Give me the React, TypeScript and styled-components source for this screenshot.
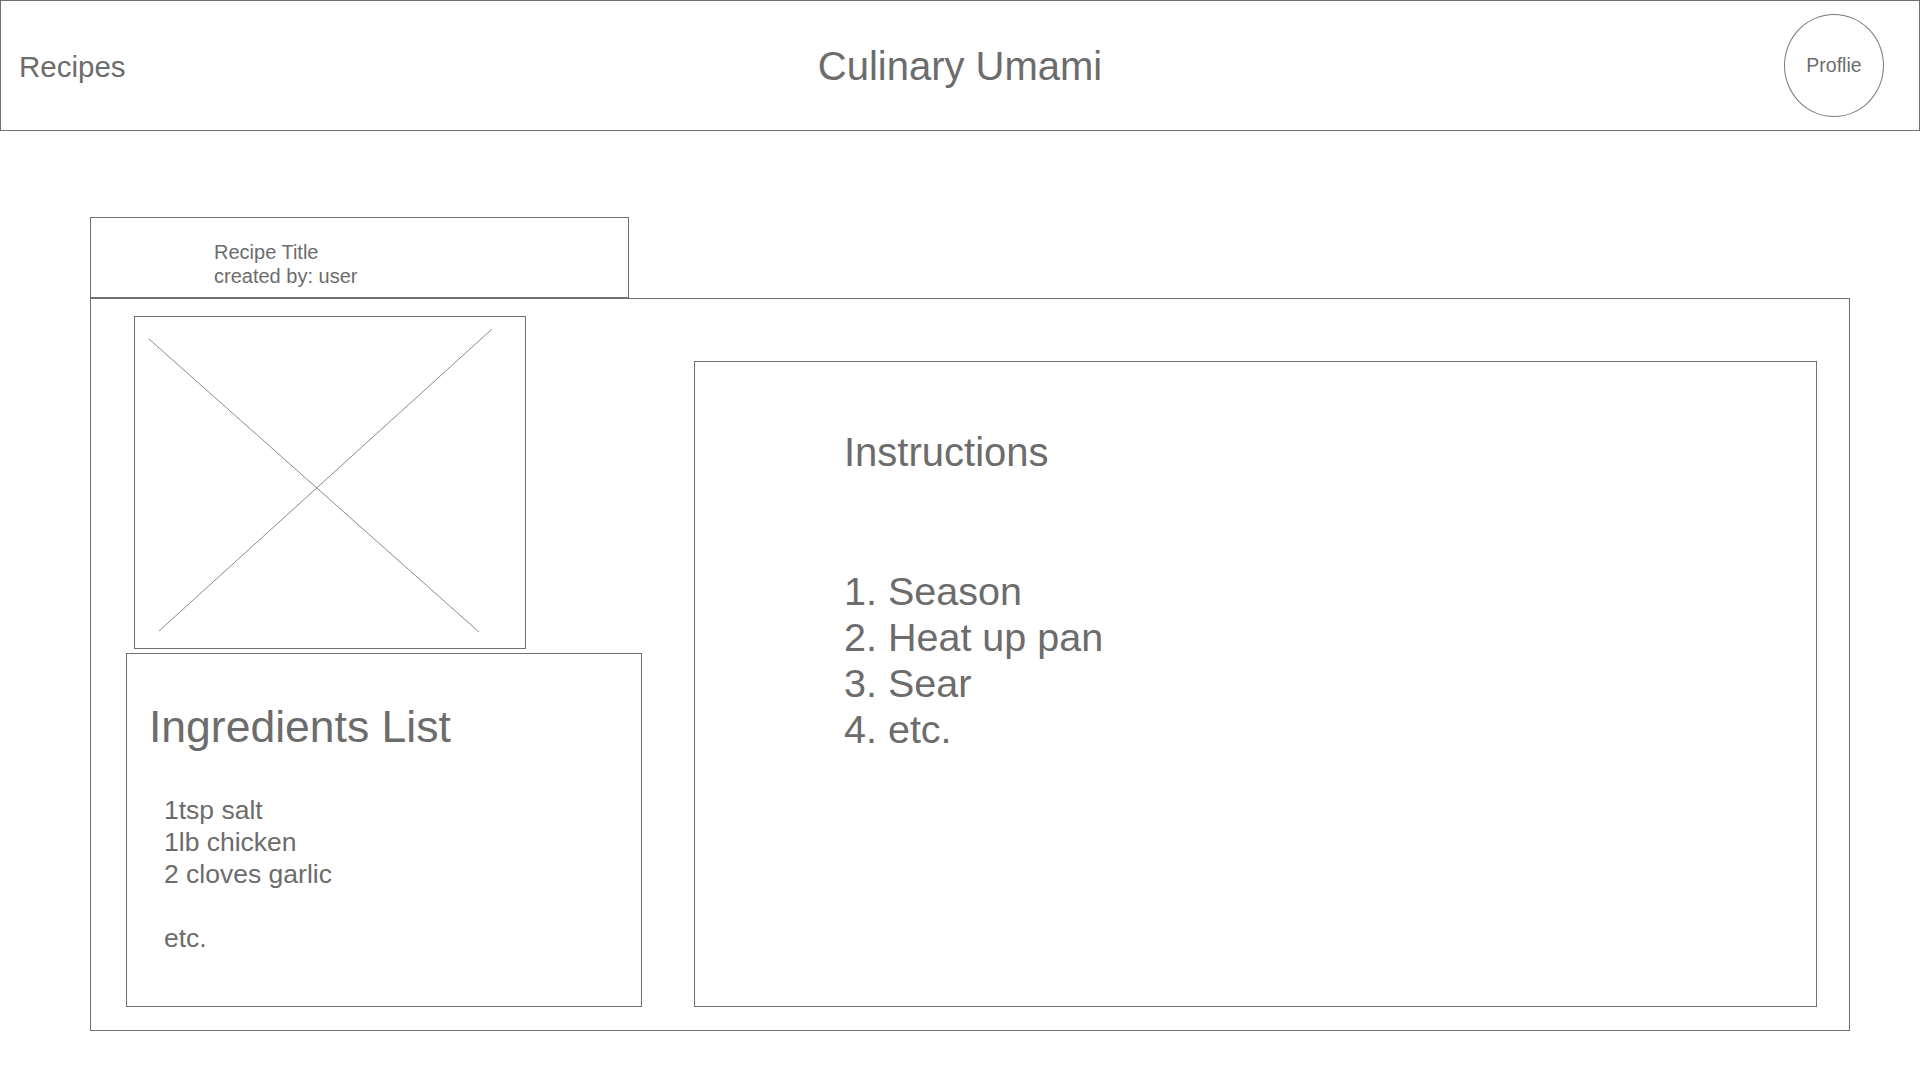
import React from 'react'
import styled, { createGlobalStyle } from 'styled-components'

const GlobalStyle = createGlobalStyle`
  * { box-sizing: border-box; }
  body {
    margin: 0;
    background: #ffffff;
    font-family: "Liberation Sans", Arial, Helvetica, sans-serif;
    color: #6c6c6c;
  }
`

const ingredients = ['1tsp salt', '1lb chicken', '2 cloves garlic', '', 'etc.']
const steps = ['Season', 'Heat up pan', 'Sear', 'etc.']

const App = () => {
  return (
    <>
      <GlobalStyle />
      <Header>
        <NavLink>Recipes</NavLink>
        <SiteTitle>Culinary Umami</SiteTitle>
        <ProfileBubble>Proflie</ProfileBubble>
      </Header>
      <Page>
        <TitleTab>
          <TabLine>Recipe Title</TabLine>
          <TabLine>created by: user</TabLine>
        </TitleTab>
        <RecipePanel>
          <LeftColumn>
            <ImagePlaceholder>
              <svg width="390" height="331" viewBox="0 0 390 331">
                <line x1="14" y1="22" x2="344" y2="315" stroke="#8a8a8a" strokeWidth="1" />
                <line x1="24" y1="314" x2="357" y2="12" stroke="#8a8a8a" strokeWidth="1" />
              </svg>
            </ImagePlaceholder>
            <IngredientsCard>
              <CardHeading>Ingredients List</CardHeading>
              <IngredientList>
                {ingredients.map((item, i) => (
                  <Ingredient key={i}>{item || '\u00a0'}</Ingredient>
                ))}
              </IngredientList>
            </IngredientsCard>
          </LeftColumn>
          <InstructionsCard>
            <InstructionsHeading>Instructions</InstructionsHeading>
            <StepList>
              {steps.map((step, i) => (
                <Step key={step}>{i + 1}. {step}</Step>
              ))}
            </StepList>
          </InstructionsCard>
        </RecipePanel>
      </Page>
    </>
  )
}

export default App

// ---------------------------------- styled ----------------------------------

const Header = styled.header`
  width: 1920px;
  height: 131px;
  border: 1px solid #707070;
  padding: 2px 16px 0 16px;
  display: grid;
  grid-template-columns: 1fr auto 1fr;
  align-items: center;
`

const NavLink = styled.a`
  justify-self: start;
  margin-left: 2px;
  font-size: 29.5px;
  color: #6c6c6c;
`

const SiteTitle = styled.h1`
  margin: 0;
  font-weight: 400;
  font-size: 40px;
  color: #6c6c6c;
`

const ProfileBubble = styled.div`
  justify-self: end;
  margin-right: 19px;
  margin-top: -2px;
  width: 100px;
  height: 103px;
  border: 1px solid #7a7a7a;
  border-radius: 50%;
  display: flex;
  align-items: center;
  justify-content: center;
  font-size: 19.5px;
  color: #6c6c6c;
`

const Page = styled.main`
  padding: 86px 0 0 90px;
`

const TitleTab = styled.div`
  width: 539px;
  height: 81px;
  border: 1px solid #707070;
  padding: 22px 0 0 123px;
`

const TabLine = styled.div`
  font-size: 20px;
  line-height: 24px;
`

const RecipePanel = styled.section`
  width: 1760px;
  height: 733px;
  border: 1px solid #707070;
  padding: 0 32px 23px 0;
  display: flex;
  align-items: flex-end;
`

const LeftColumn = styled.div`
  width: 551px;
  align-self: stretch;
  padding-top: 17px;
  display: flex;
  flex-direction: column;
  align-items: flex-start;
  gap: 4px;
`

const ImagePlaceholder = styled.div`
  margin-left: 43px;
  width: 392px;
  height: 333px;
  border: 1px solid #707070;
  svg { display: block; }
`

const IngredientsCard = styled.div`
  margin-left: 35px;
  width: 516px;
  height: 354px;
  border: 1px solid #707070;
  padding: 48px 0 0 22px;
`

const CardHeading = styled.h2`
  margin: 0;
  font-weight: 400;
  font-size: 44.5px;
  line-height: 50px;
`

const IngredientList = styled.ul`
  list-style: none;
  margin: 42px 0 0 15px;
  padding: 0;
`

const Ingredient = styled.li`
  font-size: 26.5px;
  line-height: 32px;
`

const InstructionsCard = styled.div`
  margin-left: 52px;
  flex: 1;
  height: 646px;
  border: 1px solid #707070;
  padding: 67px 0 0 149px;
`

const InstructionsHeading = styled.h2`
  margin: 0;
  font-weight: 400;
  font-size: 40px;
  line-height: 46px;
`

const StepList = styled.ol`
  list-style: none;
  margin: 93px 0 0 0;
  padding: 0;
`

const Step = styled.li`
  font-size: 39.5px;
  line-height: 46px;
`
